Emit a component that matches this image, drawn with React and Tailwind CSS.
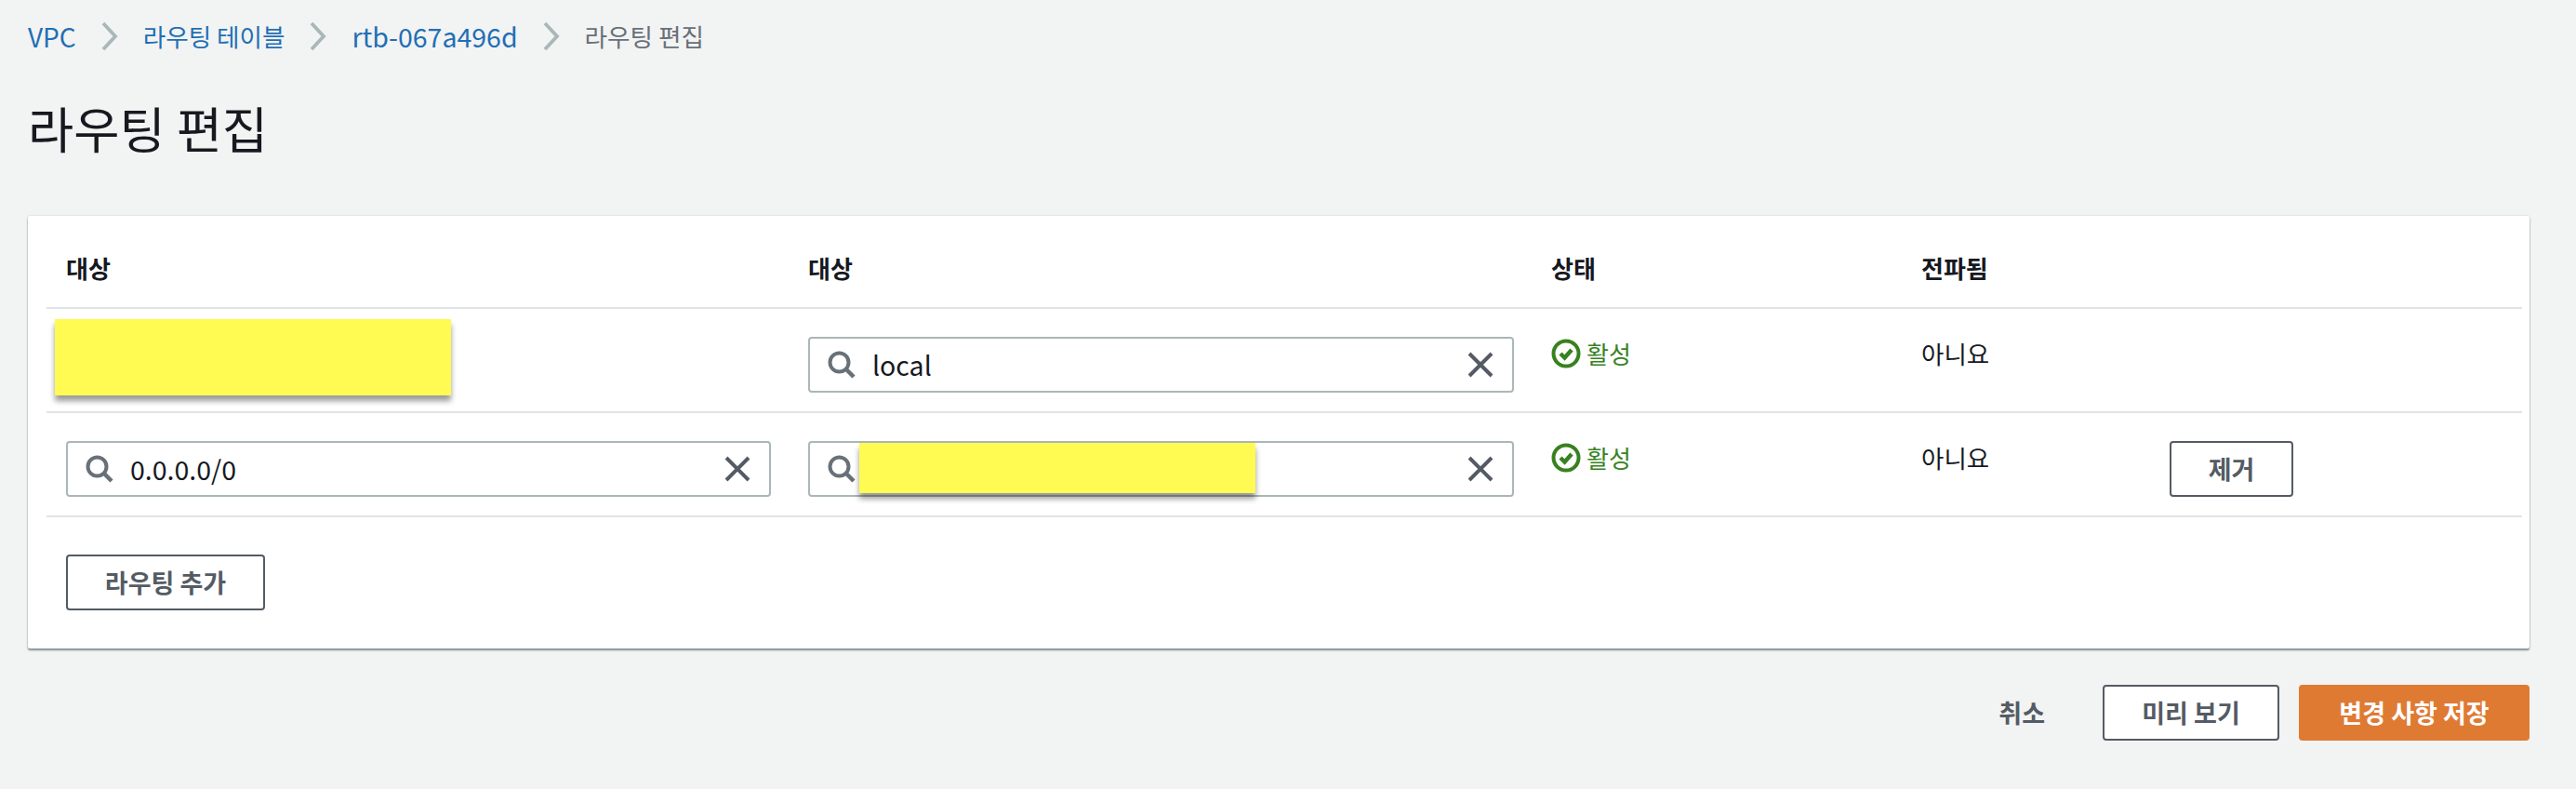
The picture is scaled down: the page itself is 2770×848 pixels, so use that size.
import React from "react";

const FONT = "font-['Noto_Sans_CJK_KR','Noto_Sans',sans-serif]";

function Chevron() {
  return (
    <svg width="18" height="32" viewBox="0 0 18 32" fill="none" className="shrink-0">
      <path d="M2 2 L15 16 L2 30" stroke="#aab7b8" strokeWidth="3.8" />
    </svg>
  );
}

function Search() {
  return (
    <svg width="30" height="30" viewBox="0 0 30 30" fill="none" className="shrink-0">
      <circle cx="12.5" cy="12.5" r="10" stroke="#687078" strokeWidth="4" />
      <path d="M19.5 19.5 L28 28" stroke="#687078" strokeWidth="4.5" />
    </svg>
  );
}

function Close() {
  return (
    <svg width="28" height="28" viewBox="0 0 28 28" fill="none" className="shrink-0">
      <path d="M2 2 L26 26 M26 2 L2 26" stroke="#545b64" strokeWidth="4" />
    </svg>
  );
}

function Check() {
  return (
    <svg width="32" height="32" viewBox="0 0 32 32" fill="none" className="shrink-0">
      <circle cx="16" cy="16" r="13.5" stroke="#37821f" strokeWidth="4" />
      <path d="M10 16 L14.5 20.5 L22 12" stroke="#37821f" strokeWidth="4.5" />
    </svg>
  );
}

function Field({ value, children }) {
  return (
    <div className="relative flex h-[60px] w-full items-center rounded-[4px] border-2 border-[#aab7b8] bg-white pl-[19px] pr-[20px]">
      <Search />
      <span className="ml-[18px] flex-1 text-[28.5px] text-[#16191f]">{value}</span>
      <Close />
      {children}
    </div>
  );
}

function Status() {
  return (
    <div className="flex items-center gap-[6px] pt-[30px] text-[26px] leading-[36px] text-[#37821f]">
      <Check />
      <span>활성</span>
    </div>
  );
}

function Btn({ children, className = "" }) {
  return (
    <button className={`flex h-[60px] items-center justify-center rounded-[4px] border-2 border-[#545b64] bg-white text-[27px] font-bold text-[#545b64] ${className}`}>
      {children}
    </button>
  );
}

const ROW = "grid grid-cols-[798px_799px_398px_267px_1fr] border-b-2 border-[#e1e4e4]";

export default function App() {
  return (
    <div className={`${FONT} h-[848px] w-[2770px] overflow-hidden bg-[#f2f3f3] pl-[30px] pr-[50px]`}>
      <nav className="flex h-[78px] items-center text-[26.6px]">
        <a className="text-[28px] text-[#1f6fb5]">VPC</a>
        <span className="ml-[27px] mr-[27px]"><Chevron /></span>
        <a className="text-[#1f6fb5]">라우팅 테이블</a>
        <span className="ml-[27px] mr-[27px]"><Chevron /></span>
        <a className="text-[28.5px] text-[#1f6fb5]">rtb-067a496d</a>
        <span className="ml-[27px] mr-[27px]"><Chevron /></span>
        <span className="text-[#687078]">라우팅 편집</span>
      </nav>

      <h1 className="mt-[29px] text-[53.5px] font-normal leading-[60px] text-[#16191f]">라우팅 편집</h1>

      <section className="mt-[65px] h-[465px] rounded-[2px] bg-white pl-[20px] pr-[8px] shadow-[0_2px_2px_rgba(0,28,36,0.45),0_0_2px_rgba(0,28,36,0.2)]">
        <div className={`${ROW} h-[100px] items-center pt-[12px] text-[26px] font-bold text-[#16191f]`}>
          <div className="pl-[21px]">대상</div>
          <div className="pl-[21px]">대상</div>
          <div className="pl-[21px]">상태</div>
          <div className="pl-[21px]">전파됨</div>
          <div />
        </div>

        <div className={`${ROW} h-[112px]`}>
          <div className="pl-[9px] pt-[11px]">
            <div className="h-[82px] w-[426px] bg-[#fffb52] shadow-[0_6px_6px_rgba(0,0,0,0.4)]" />
          </div>
          <div className="pl-[21px] pr-[19px] pt-[30px]"><Field value="local" /></div>
          <div className="pl-[21px]"><Status /></div>
          <div className="pl-[21px] pt-[30px] text-[26.5px] leading-[36px] text-[#16191f]">아니요</div>
          <div />
        </div>

        <div className={`${ROW} h-[112px]`}>
          <div className="pl-[21px] pr-[19px] pt-[30px]"><Field value="0.0.0.0/0" /></div>
          <div className="pl-[21px] pr-[19px] pt-[30px]">
            <Field value="">
              <div className="absolute left-[53px] top-0 h-[54px] w-[426px] bg-[#fffb52] shadow-[0_6px_6px_rgba(0,0,0,0.4)]" />
            </Field>
          </div>
          <div className="pl-[21px]"><Status /></div>
          <div className="pl-[21px] pt-[30px] text-[26.5px] leading-[36px] text-[#16191f]">아니요</div>
          <div className="pl-[21px] pt-[30px]"><Btn className="w-[133px]">제거</Btn></div>
        </div>

        <div className="pl-[21px] pt-[40px]">
          <Btn className="w-[214px]">라우팅 추가</Btn>
        </div>
      </section>

      <div className="mt-[39px] flex items-center justify-end">
        <span className="text-[27px] font-bold text-[#545b64]">취소</span>
        <Btn className="ml-[62px] w-[190px]">미리 보기</Btn>
        <button className="ml-[21px] flex h-[60px] w-[248px] items-center justify-center rounded-[4px] bg-[#df7a33] text-[27px] font-bold text-white">
          변경 사항 저장
        </button>
      </div>
    </div>
  );
}
